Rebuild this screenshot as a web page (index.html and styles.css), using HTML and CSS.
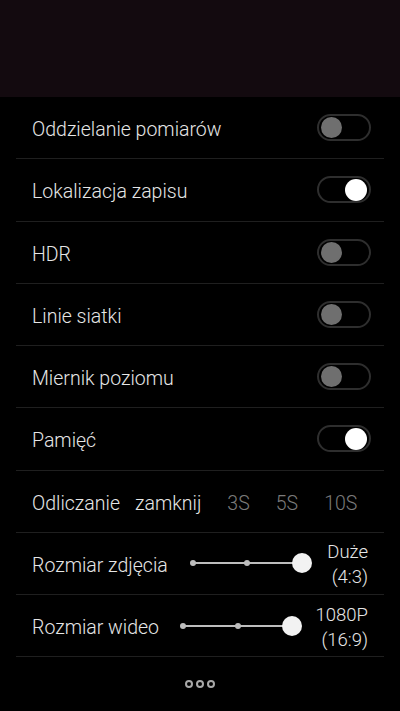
FILE: index.html
```html
<!DOCTYPE html>
<html lang="pl">
<head>
<meta charset="utf-8">
<link rel="stylesheet" href="styles.css">
</head>
<body>
<div class="screen">
  <div class="preview"></div>
  <div class="panel">
    <div class="row"><span class="label">Oddzielanie pomiarów</span><span class="toggle"><span class="knob"></span></span></div>
    <div class="row"><span class="label">Lokalizacja zapisu</span><span class="toggle on"><span class="knob"></span></span></div>
    <div class="row"><span class="label">HDR</span><span class="toggle"><span class="knob"></span></span></div>
    <div class="row"><span class="label">Linie siatki</span><span class="toggle"><span class="knob"></span></span></div>
    <div class="row"><span class="label">Miernik poziomu</span><span class="toggle"><span class="knob"></span></span></div>
    <div class="row"><span class="label">Pamięć</span><span class="toggle on"><span class="knob"></span></span></div>
    <div class="row countdown">
      <span class="label">Odliczanie</span>
      <span class="opt active">zamknij</span>
      <span class="opt">3S</span>
      <span class="opt">5S</span>
      <span class="opt">10S</span>
    </div>
    <div class="row slider-row photo">
      <span class="label">Rozmiar zdjęcia</span>
      <span class="slider"><span class="dot d0"></span><span class="dot d1"></span><span class="thumb"></span></span>
      <span class="value">Duże<br>(4:3)</span>
    </div>
    <div class="row slider-row video">
      <span class="label">Rozmiar wideo</span>
      <span class="slider"><span class="dot d0"></span><span class="dot d1"></span><span class="thumb"></span></span>
      <span class="value">1080P<br>(16:9)</span>
    </div>
    <div class="more"><span class="ring"></span><span class="ring"></span><span class="ring"></span></div>
  </div>
</div>
</body>
</html>
```
FILE: styles.css
```css
* { box-sizing: border-box; }
html, body { margin: 0; padding: 0; background: #000; }
body { width: 400px; height: 711px; overflow: hidden; font-family: Roboto, "Liberation Sans", sans-serif; }
.screen { display: flex; flex-direction: column; height: 711px; }
.preview { height: 97px; background: #130a0f; flex: none; }
.panel { flex: 1; background: #000; display: flex; flex-direction: column; }
.row {
  height: 62.25px; flex: none; margin: 0 16px; padding: 0 13px 0 16px;
  border-bottom: 1px solid #1f1f1f;
  display: flex; align-items: center; justify-content: space-between;
}
.label { color: #e6e6e6; font-size: 19.5px; font-weight: 300; padding-top: 4px; }
.toggle {
  width: 54px; height: 27px; border-radius: 14px; border: 2px solid #2e2e2e;
  display: flex; align-items: center; padding: 0 2px; justify-content: flex-start;
}
.toggle .knob { width: 21px; height: 21px; border-radius: 50%; background: #6f6f6f; }
.toggle.on { justify-content: flex-end; }
.toggle.on .knob { background: #fff; width: 22px; height: 22px; }
.countdown { justify-content: flex-start; padding-right: 0; }
.opt { font-size: 19.5px; font-weight: 300; color: #7a7a7a; margin-left: 26px; padding-top: 4px; }
.opt.active { color: #e6e6e6; margin-left: 15px; }
.slider-row { justify-content: flex-start; padding-right: 0; }
.slider { position: relative; height: 20px; flex: none; width: 109px; }
.slider::before {
  content: ""; position: absolute; left: 0; right: 0; top: 9px; height: 2px; background: #bdbdbd;
}
.dot { position: absolute; top: 7px; width: 6px; height: 6px; border-radius: 50%; background: #bdbdbd; margin-left: -3px; }
.d0 { left: 0; }
.d1 { left: 50%; }
.thumb { position: absolute; top: 0; right: -10px; width: 20px; height: 20px; border-radius: 50%; background: #f2f2f2; }
.photo .slider { margin-left: 25px; }
.video .slider { margin-left: 24px; }
.value { margin-left: auto; text-align: right; color: #e6e6e6; font-size: 18.5px; font-weight: 300; line-height: 25px; padding-right: 16px; padding-top: 4px; }
.more { flex: 1; display: flex; justify-content: center; align-items: center; gap: 3px; padding-bottom: 1px; }
.ring { width: 8px; height: 8px; border-radius: 50%; border: 2px solid #a8a8a8; }
```
